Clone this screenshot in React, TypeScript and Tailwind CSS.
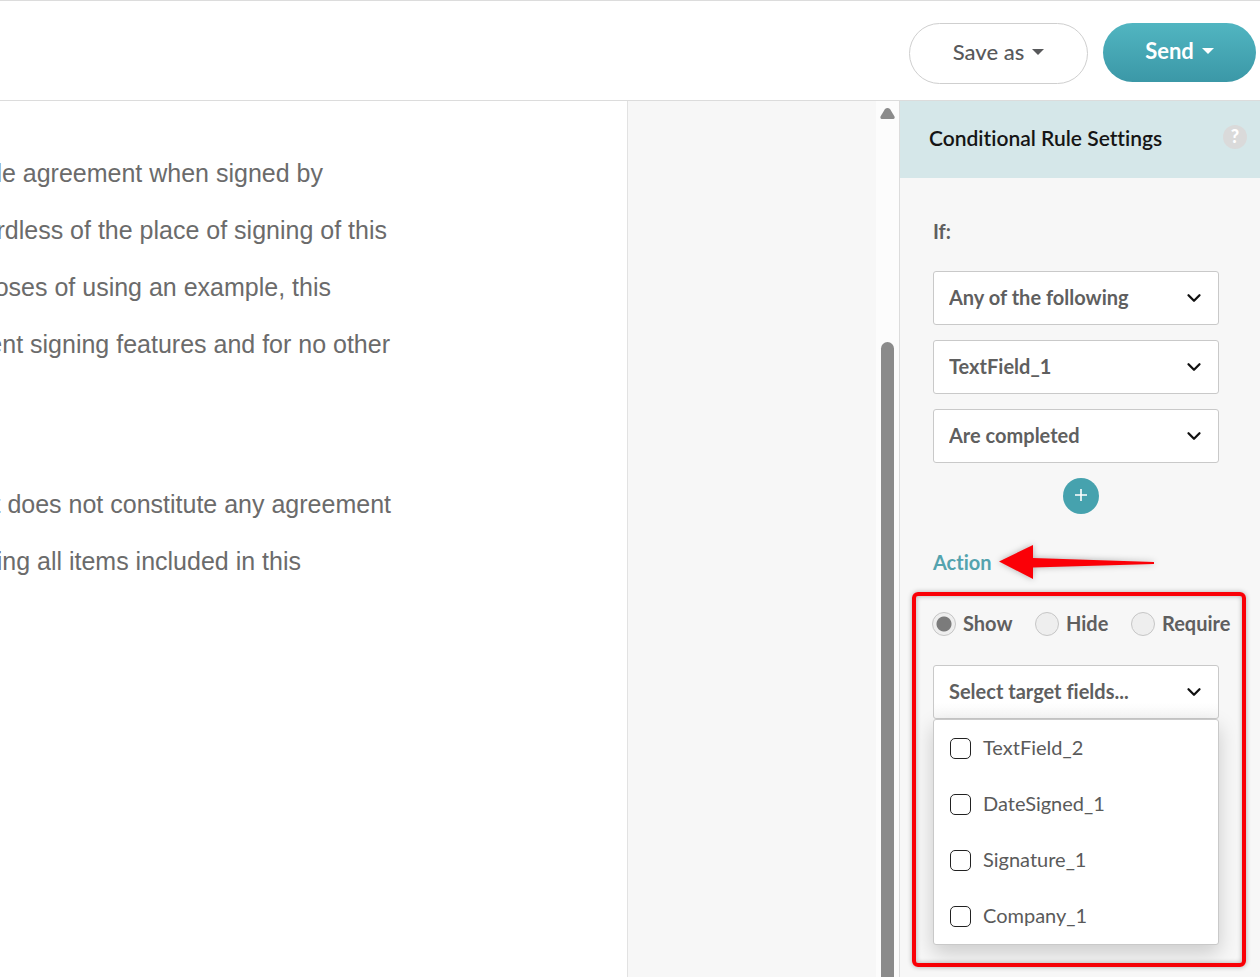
import { useState } from 'react';
import { ChevronDown } from 'lucide-react';

const paragraphs = [
  [
    { text: 'le agreement when signed by', width: 'w-[323px]' },
    { text: 'rdless of the place of signing of this', width: 'w-[387px]' },
    { text: 'oses of using an example, this', width: 'w-[331px]' },
    { text: 'ent signing features and for no other', width: 'w-[390px]' },
  ],
  [
    { text: 't does not constitute any agreement', width: 'w-[391px]' },
    { text: 'ing all items included in this', width: 'w-[301px]' },
  ],
];

const actions = ['Show', 'Hide', 'Require'];
const targetFields = ['TextField_2', 'DateSigned_1', 'Signature_1', 'Company_1'];

function Caret() {
  return (
    <svg width="12" height="6" viewBox="0 0 12 6" fill="currentColor" aria-hidden="true">
      <path d="M0 0h12L6 6z" />
    </svg>
  );
}

function TopBar() {
  return (
    <header className="flex h-[101px] shrink-0 items-start justify-end gap-[15px] border-y border-[#dcdcdc] bg-white pt-[22px] pr-1">
      <button
        type="button"
        className="flex h-[61px] w-[179px] items-center justify-center gap-2 rounded-full border border-[#cfcfcf] pb-1 text-[22px] font-medium text-[#58595b]"
      >
        Save as
        <Caret />
      </button>
      <button
        type="button"
        className="flex h-[59px] w-[153px] items-center justify-center gap-2 rounded-full bg-linear-to-b from-[#51b5c1] to-[#3b98a7] pb-1 text-[22px] font-bold text-white"
      >
        Send
        <Caret />
      </button>
    </header>
  );
}

function DocumentView() {
  return (
    <main className="flex min-w-0 flex-1">
      <article className="min-w-0 flex-1 overflow-hidden border-r border-[#e2e2e2] bg-white pt-11 font-['Liberation_Sans',Arial,sans-serif] text-[25px] leading-[57px] text-[#6b6b6b]">
        {paragraphs.map((lines, i) => (
          <div key={i} className="mb-[103px]">
            {lines.map((line) => (
              <p key={line.text} className={`flex justify-end whitespace-nowrap ${line.width}`}>
                {line.text}
              </p>
            ))}
          </div>
        ))}
      </article>
      <div className="w-[248px] shrink-0 bg-[#f7f7f7]" />
      <div className="flex w-[23px] shrink-0 flex-col items-center bg-[#fcfcfc] pt-[7px]">
        <svg width="15" height="11" viewBox="0 0 15 11" fill="#8b8b8b" aria-hidden="true">
          <path d="M5 1Q7.5-.8 10 1L14.5 8.500Q15 10.500 13.500 11H1.500Q0 10.500.5 8.500z" />
        </svg>
        <div className="mt-[223px] w-[13px] flex-1 rounded-t-full bg-[#8b8b8b]" />
      </div>
    </main>
  );
}

function SelectBox({ label, value }: { label: string; value: string }) {
  return (
    <div className="relative">
      <select
        aria-label={label}
        className="h-[54px] w-full appearance-none rounded-[3px] border border-[#c9c9c9] bg-white pr-10 pb-0.5 pl-[15px] text-[20px] font-bold text-[#5f5f5f]"
      >
        <option>{value}</option>
      </select>
      <ChevronDown
        size={22}
        strokeWidth={2.5}
        className="pointer-events-none absolute top-4 right-3.5 text-[#111]"
      />
    </div>
  );
}

function Arrow() {
  return (
    <svg width="158" height="36" viewBox="0 0 158 36" className="drop-shadow-[0_0_3px_rgba(0,0,0,0.3)]" aria-hidden="true">
      <path d="M1 17.500 35 1v13l121 4v2L35 23.500V35z" fill="#fb0007" />
    </svg>
  );
}

function TargetFields() {
  const [open, setOpen] = useState(true);
  const [selected, setSelected] = useState<string[]>([]);

  const toggle = (field: string) => {
    setSelected((prev) => (prev.includes(field) ? prev.filter((f) => f !== field) : [...prev, field]));
  };

  return (
    <div className="w-[286px]">
      <button
        type="button"
        aria-expanded={open}
        onClick={() => setOpen(!open)}
        className="flex h-[54px] w-full items-center justify-between rounded-[3px] border border-[#c9c9c9] bg-linear-to-b from-white from-70% to-[#f7f7f7] pr-[13px] pl-[15px] text-[20px] font-bold text-[#5f5f5f]"
      >
        <span className="pb-0.5">Select target fields...</span>
        <ChevronDown size={22} strokeWidth={2.5} className="text-[#111]" />
      </button>
      {open && (
        <div className="rounded-[3px] border border-[#c9c9c9] bg-white shadow-[0_8px_20px_rgba(0,0,0,0.18)]">
          {targetFields.map((field) => (
            <label key={field} className="flex h-14 items-center gap-3 pl-4 text-[20px] text-[#5a5a5a]">
              <input
                type="checkbox"
                checked={selected.includes(field)}
                onChange={() => toggle(field)}
                className="size-[21px] appearance-none rounded-[5px] border border-[#222] bg-white checked:bg-[#46a2ae]"
              />
              <span className="pb-0.5">{field}</span>
            </label>
          ))}
        </div>
      )}
    </div>
  );
}

function RulePanel() {
  const [action, setAction] = useState('Show');

  return (
    <aside className="w-[361px] shrink-0 border-l border-[#dcdcdc] bg-[#f7f7f7] text-[#5f5f5f]">
      <div className="flex h-[77px] items-center justify-between bg-[#d5e7e9] pr-[13px] pb-1 pl-[29px]">
        <h1 className="text-[21px] font-semibold text-[#151515]">Conditional Rule Settings</h1>
        <button
          type="button"
          aria-label="Help"
          className="mb-0.5 flex size-6 items-center justify-center rounded-full bg-[#dadada] text-[18px] font-black text-white"
        >
          ?
        </button>
      </div>

      <section className="pt-[39px] pl-[33px]">
        <h2 className="text-[20px] leading-7 font-bold">If:</h2>
        <div className="mt-[26px] flex w-[286px] flex-col gap-[15px]">
          <SelectBox label="Condition" value="Any of the following" />
          <SelectBox label="Field" value="TextField_1" />
          <SelectBox label="State" value="Are completed" />
        </div>
        <div className="mt-[15px] flex w-[296px] justify-center">
          <button
            type="button"
            aria-label="Add condition"
            className="flex size-9 items-center justify-center rounded-full bg-[#46a2ae]"
          >
            <svg width="14" height="14" viewBox="0 0 14 14" stroke="#fff" strokeWidth="1.600" className="mb-0.5" aria-hidden="true">
              <path d="M7 1v12M1 7h12" />
            </svg>
          </button>
        </div>
      </section>

      <section>
        <div className="mt-[30px] flex h-9 items-center gap-[7px] pl-[33px]">
          <h2 className="w-[58px] text-[20px] font-bold text-[#54a3ae]">Action</h2>
          <Arrow />
        </div>
        <div className="mt-3 mr-3.5 ml-3 rounded-md border-4 border-[#f90006] pt-[15px] pb-[18px] pl-[17px] shadow-[0_0_5px_rgba(0,0,0,0.3),inset_0_0_5px_rgba(0,0,0,0.3)]">
          <fieldset className="mb-[30px] -ml-px grid h-6 grid-cols-[103px_96px_auto] items-center">
            {actions.map((name) => (
              <label key={name} className="flex items-center gap-[7px] text-[20px] leading-6 font-bold">
                <input
                  type="radio"
                  name="action"
                  checked={action === name}
                  onChange={() => setAction(name)}
                  className="size-6 shrink-0 appearance-none rounded-full border border-[#c6c6c6] bg-[#eee] checked:bg-[radial-gradient(circle,#7b7b7b_7px,#eee_8px)]"
                />
                <span className="pb-0.5">{name}</span>
              </label>
            ))}
          </fieldset>
          <TargetFields />
        </div>
      </section>
    </aside>
  );
}

export default function App() {
  return (
    <div className="flex h-screen flex-col overflow-hidden bg-white font-[Lato,'Open_Sans',sans-serif] [font-variant-ligatures:none]">
      <TopBar />
      <div className="flex min-h-0 flex-1">
        <DocumentView />
        <RulePanel />
      </div>
    </div>
  );
}
